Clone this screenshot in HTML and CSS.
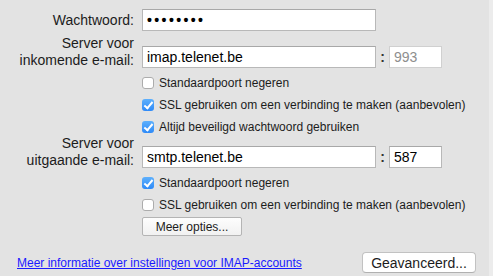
FILE: index.html
```html
<!DOCTYPE html>
<html>
<head>
<meta charset="utf-8">
<link rel="stylesheet" href="styles.css">
</head>
<body>
<div class="page">
  <div class="main">
    <div class="row row-first">
      <div class="label">Wachtwoord:</div>
      <div class="field field-wide password">••••••••</div>
    </div>

    <div class="row row-server">
      <div class="label">Server voor<br>inkomende e-mail:</div>
      <div class="field field-wide">imap.telenet.be</div>
      <div class="colon">:</div>
      <div class="field field-port disabled">993</div>
    </div>

    <div class="checks">
      <div class="check"><span class="box"></span><span>Standaardpoort negeren</span></div>
      <div class="check"><span class="box on"></span><span>SSL gebruiken om een verbinding te maken (aanbevolen)</span></div>
      <div class="check"><span class="box on"></span><span>Altijd beveiligd wachtwoord gebruiken</span></div>
    </div>

    <div class="row row-server row-out">
      <div class="label">Server voor<br>uitgaande e-mail:</div>
      <div class="field field-wide">smtp.telenet.be</div>
      <div class="colon">:</div>
      <div class="field field-port">587</div>
    </div>

    <div class="checks">
      <div class="check"><span class="box on"></span><span>Standaardpoort negeren</span></div>
      <div class="check"><span class="box"></span><span>SSL gebruiken om een verbinding te maken (aanbevolen)</span></div>
    </div>

    <div class="more-wrap">
      <div class="btn btn-more">Meer opties...</div>
    </div>

    <div class="bottom">
      <a class="link" href="#">Meer informatie over instellingen voor IMAP-accounts</a>
      <div class="btn btn-adv">Geavanceerd...</div>
    </div>
  </div>
  <div class="edge"></div>
</div>
</body>
</html>
```

FILE: styles.css
```css
html, body {
  margin: 0;
  padding: 0;
  background: #e3e3e3;
}
body {
  width: 493px;
  height: 276px;
  overflow: hidden;
  font-family: "Liberation Sans", Arial, sans-serif;
  font-size: 14px;
  color: #000;
}
.page {
  display: flex;
  height: 276px;
}
.main {
  width: 489px;
  padding-top: 9px;
  box-sizing: border-box;
}
.edge {
  width: 4px;
  background: #ececec;
}
.row {
  display: flex;
  align-items: center;
}
.label {
  width: 134px;
  margin-right: 8px;
  text-align: right;
  color: #1c1c1c;
}
.row-server {
  margin-top: 4px;
  align-items: flex-end;
}
.row-server .label {
  line-height: 16.5px;
}
.row-out {
  margin-top: 0;
}
.field {
  height: 22px;
  box-sizing: border-box;
  background: #fff;
  border: 1px solid #b8b8b8;
  border-top-color: #a8a8a8;
  padding: 0 4px;
  line-height: 20px;
  white-space: nowrap;
  overflow: hidden;
}
.field-wide {
  width: 234px;
}
.field-port {
  width: 53px;
}
.disabled {
  color: #8e8e8e;
  border-color: #d0d0d0;
}
.password {
  font-size: 14px;
  font-weight: bold;
  letter-spacing: 2.4px;
}
.colon {
  width: 13px;
  text-align: center;
  line-height: 22px;
  font-weight: bold;
  color: #333;
}
.checks {
  margin-top: 7px;
  margin-left: 142px;
  display: flex;
  flex-direction: column;
  gap: 6px;
  font-size: 12px;
}
.check {
  display: flex;
  align-items: center;
  height: 16px;
  white-space: nowrap;
  color: #1c1c1c;
}
.box {
  width: 12px;
  height: 12px;
  box-sizing: border-box;
  border: 1px solid #acacac;
  border-radius: 3px;
  background: #fff;
  margin-right: 5px;
  flex: none;
  position: relative;
}
.box.on {
  border: none;
  background: linear-gradient(#5eb0fc, #2e8af8);
}
.box.on::after {
  content: "";
  position: absolute;
  left: 4px;
  top: 1px;
  width: 3px;
  height: 7px;
  border: solid #fff;
  border-width: 0 2px 2px 0;
  transform: rotate(40deg);
}
.more-wrap {
  margin-top: 4px;
  margin-left: 142px;
}
.btn {
  display: flex;
  align-items: center;
  justify-content: center;
  box-sizing: border-box;
  background: #fff;
  color: #1c1c1c;
  white-space: nowrap;
}
.btn-more {
  width: 100px;
  height: 19px;
  font-size: 12px;
  border: 1px solid #b4b4b4;
  border-radius: 2px;
  background: linear-gradient(#fdfdfd, #f1f1f1);
}
.bottom {
  margin-top: 16px;
  padding: 0 13px 0 17px;
  display: flex;
  justify-content: space-between;
  align-items: center;
}
.link {
  color: #1a1aff;
  text-decoration: underline;
  font-size: 12px;
  margin-top: 1px;
}
.btn-adv {
  width: 114px;
  height: 21px;
  border: 1px solid #c2c2c2;
  border-bottom-color: #b0b0b0;
  border-radius: 4px;
  font-size: 14px;
}
```
